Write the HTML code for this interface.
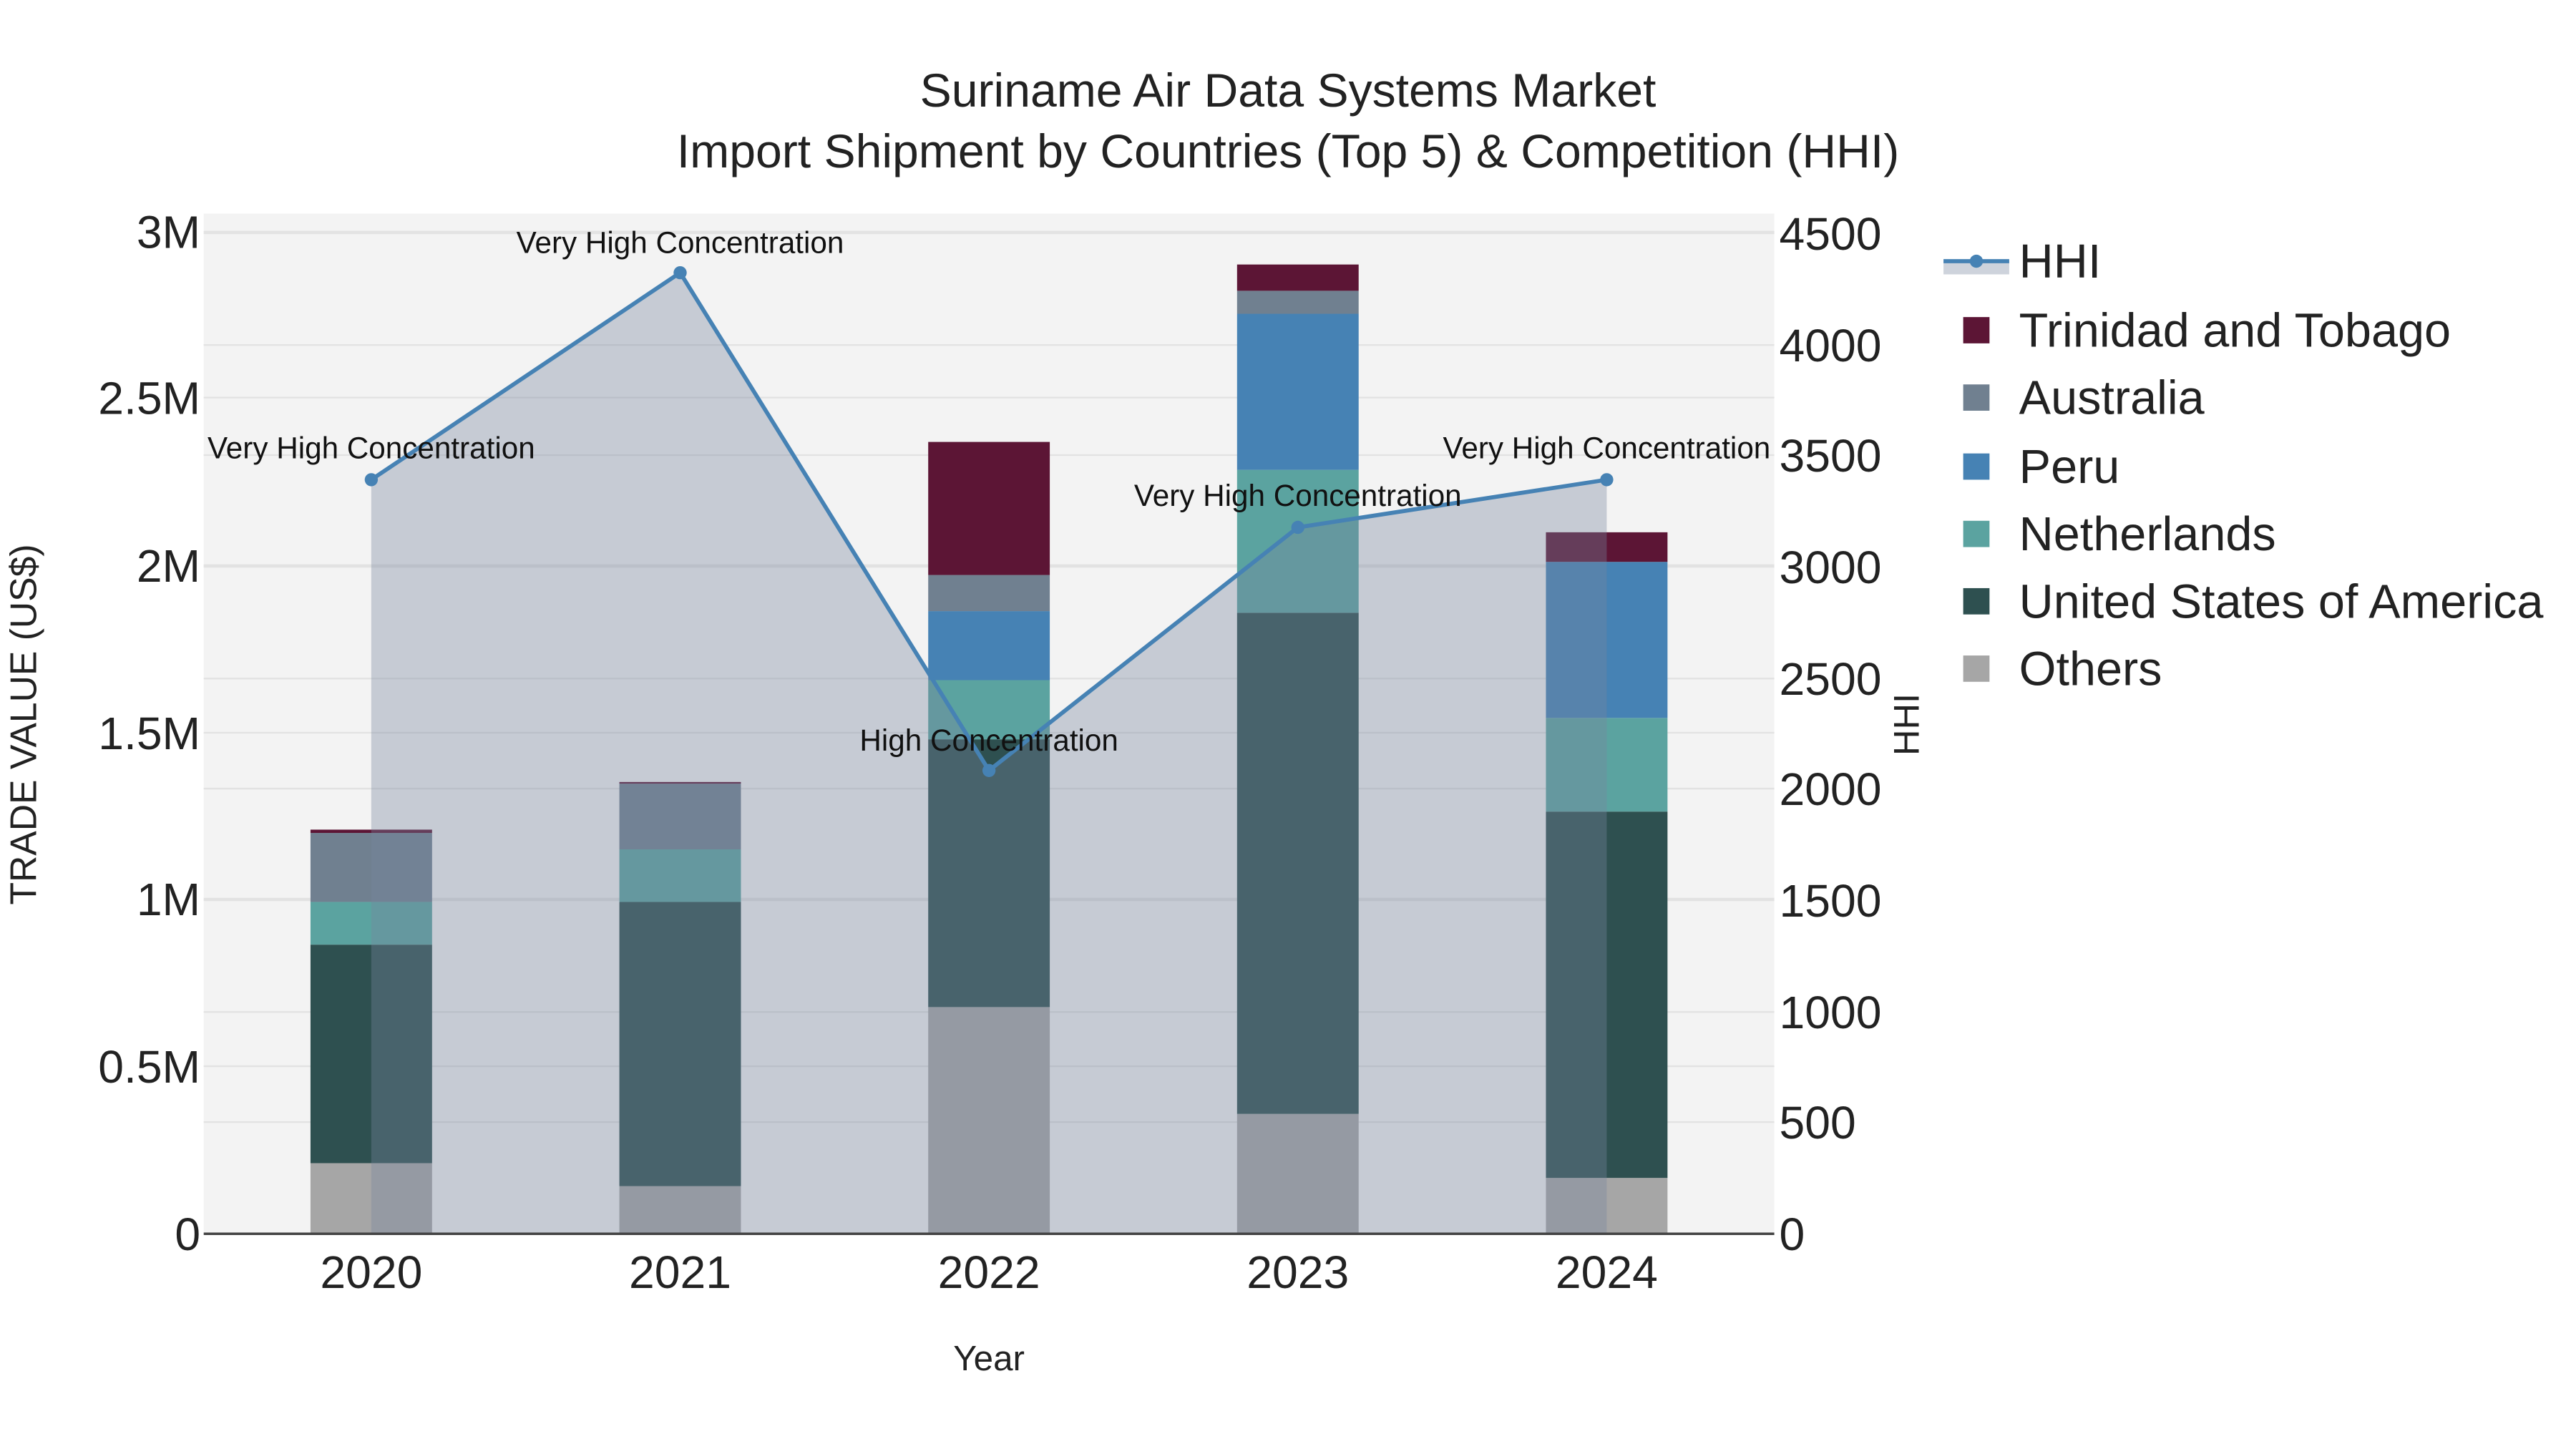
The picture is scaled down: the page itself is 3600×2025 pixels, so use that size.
<!DOCTYPE html>
<html><head><meta charset="utf-8"><style>html,body{margin:0;padding:0;background:#fff}svg{display:block}</style></head>
<body>
<svg width="3600" height="2025" viewBox="0 0 1568 882" preserveAspectRatio="none" xmlns="http://www.w3.org/2000/svg" font-family="Liberation Sans, sans-serif">
<rect width="1568" height="882" fill="#fff"/>
<rect x="124" y="130" width="956" height="621" fill="#f3f3f3"/>
<g stroke="#e2e2e2" stroke-width="1">
<line x1="124" x2="1080" y1="649" y2="649"/><line x1="124" x2="1080" y1="547" y2="547"/><line x1="124" x2="1080" y1="446" y2="446"/><line x1="124" x2="1080" y1="344" y2="344"/><line x1="124" x2="1080" y1="242" y2="242"/><line x1="124" x2="1080" y1="141" y2="141"/>
<line x1="124" x2="1080" y1="683" y2="683"/><line x1="124" x2="1080" y1="616" y2="616"/><line x1="124" x2="1080" y1="548" y2="548"/><line x1="124" x2="1080" y1="480" y2="480"/><line x1="124" x2="1080" y1="413" y2="413"/><line x1="124" x2="1080" y1="345" y2="345"/><line x1="124" x2="1080" y1="277" y2="277"/><line x1="124" x2="1080" y1="210" y2="210"/><line x1="124" x2="1080" y1="142" y2="142"/>
</g>
<g>
<rect x="189" y="708" width="74" height="43" fill="#a6a6a6"/><rect x="189" y="575" width="74" height="133" fill="#2e5050"/><rect x="189" y="549" width="74" height="26" fill="#5ba3a0"/><rect x="189" y="507" width="74" height="42" fill="#708090"/><rect x="189" y="505" width="74" height="2" fill="#5c1535"/>
<rect x="377" y="722" width="74" height="29" fill="#a6a6a6"/><rect x="377" y="549" width="74" height="173" fill="#2e5050"/><rect x="377" y="517" width="74" height="32" fill="#5ba3a0"/><rect x="377" y="477" width="74" height="40" fill="#708090"/><rect x="377" y="476" width="74" height="1" fill="#5c1535"/>
<rect x="565" y="613" width="74" height="138" fill="#a6a6a6"/><rect x="565" y="450" width="74" height="163" fill="#2e5050"/><rect x="565" y="414" width="74" height="36" fill="#5ba3a0"/><rect x="565" y="372" width="74" height="42" fill="#4682b4"/><rect x="565" y="350" width="74" height="22" fill="#708090"/><rect x="565" y="269" width="74" height="81" fill="#5c1535"/>
<rect x="753" y="678" width="74" height="73" fill="#a6a6a6"/><rect x="753" y="373" width="74" height="305" fill="#2e5050"/><rect x="753" y="286" width="74" height="87" fill="#5ba3a0"/><rect x="753" y="191" width="74" height="95" fill="#4682b4"/><rect x="753" y="177" width="74" height="14" fill="#708090"/><rect x="753" y="161" width="74" height="16" fill="#5c1535"/>
<rect x="941" y="717" width="74" height="34" fill="#a6a6a6"/><rect x="941" y="494" width="74" height="223" fill="#2e5050"/><rect x="941" y="437" width="74" height="57" fill="#5ba3a0"/><rect x="941" y="342" width="74" height="95" fill="#4682b4"/><rect x="941" y="324" width="74" height="18" fill="#5c1535"/>
</g>
<polygon points="226,751 226,292 414,166 602,469 790,321 978,292 978,751" fill="rgb(118,134,158)" fill-opacity="0.36"/>
<polyline points="226,292 414,166 602,469 790,321 978,292" fill="none" stroke="#4682b4" stroke-width="2.5"/>
<g fill="#4682b4"><circle cx="226" cy="292" r="4"/><circle cx="414" cy="166" r="4"/><circle cx="602" cy="469" r="4"/><circle cx="790" cy="321" r="4"/><circle cx="978" cy="292" r="4"/></g>
<line x1="124" x2="1080" y1="751" y2="751" stroke="#444" stroke-width="1.5"/>
<g font-size="18.4" fill="#111" text-anchor="middle">
<text x="226" y="279">Very High Concentration</text><text x="414" y="154">Very High Concentration</text><text x="602" y="457">High Concentration</text><text x="790" y="308">Very High Concentration</text><text x="978" y="279">Very High Concentration</text>
</g>
<g font-size="28" fill="#222" text-anchor="end">
<text x="122" y="761">0</text><text x="122" y="659">0.5M</text><text x="122" y="557">1M</text><text x="122" y="456">1.5M</text><text x="122" y="354">2M</text><text x="122" y="252">2.5M</text><text x="122" y="151">3M</text>
</g>
<g font-size="28" fill="#222" text-anchor="start">
<text x="1083" y="761">0</text><text x="1083" y="693">500</text><text x="1083" y="626">1000</text><text x="1083" y="558">1500</text><text x="1083" y="490">2000</text><text x="1083" y="423">2500</text><text x="1083" y="355">3000</text><text x="1083" y="287">3500</text><text x="1083" y="220">4000</text><text x="1083" y="152">4500</text>
</g>
<g font-size="28" fill="#222" text-anchor="middle">
<text x="226" y="784">2020</text><text x="414" y="784">2021</text><text x="602" y="784">2022</text><text x="790" y="784">2023</text><text x="978" y="784">2024</text>
</g>
<text x="602" y="834" font-size="21.5" fill="#222" text-anchor="middle">Year</text>
<text transform="translate(22,441) rotate(-90)" font-size="22.5" fill="#222" text-anchor="middle">TRADE VALUE (US$)</text>
<text transform="translate(1168,441) rotate(-90)" font-size="22" fill="#222" text-anchor="middle">HHI</text>
<g font-size="28.8" fill="#222" text-anchor="middle">
<text x="784" y="65">Suriname Air Data Systems Market</text>
<text x="784" y="102">Import Shipment by Countries (Top 5) &amp; Competition (HHI)</text>
</g>
<g font-size="29" fill="#222">
<rect x="1183" y="159" width="40" height="8" fill="rgb(118,134,158)" fill-opacity="0.36"/>
<line x1="1183" x2="1223" y1="159" y2="159" stroke="#4682b4" stroke-width="2.5"/><circle cx="1203" cy="159" r="4" fill="#4682b4"/>
<text x="1229" y="169">HHI</text>
<rect x="1195" y="193" width="16" height="16" fill="#5c1535"/><text x="1229" y="211">Trinidad and Tobago</text>
<rect x="1195" y="234" width="16" height="16" fill="#708090"/><text x="1229" y="252">Australia</text>
<rect x="1195" y="276" width="16" height="16" fill="#4682b4"/><text x="1229" y="294">Peru</text>
<rect x="1195" y="317" width="16" height="16" fill="#5ba3a0"/><text x="1229" y="335">Netherlands</text>
<rect x="1195" y="358" width="16" height="16" fill="#2e5050"/><text x="1229" y="376">United States of America</text>
<rect x="1195" y="399" width="16" height="16" fill="#a6a6a6"/><text x="1229" y="417">Others</text>
</g>
</svg>
</body></html>
